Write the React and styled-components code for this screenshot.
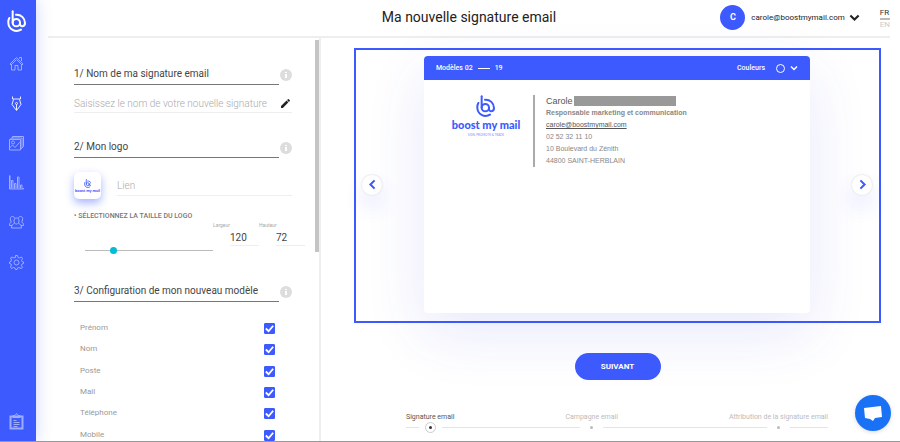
import React, { useState } from "react";
import styled, { createGlobalStyle } from "styled-components";

const BLUE = "#3d5afe";

const fields = ["Prénom", "Nom", "Poste", "Mail", "Téléphone", "Mobile"];

function LogoMark({ size }) {
  return (
    <LogoSvg $size={size} viewBox="0 0 58 66" aria-hidden="true">
      <path d="M17 4V38" />
      <circle cx="28" cy="38" r="11" />
      <path d="M27 14A25 25 0 0 1 54 39C54 51 39 52 39 42V38" />
      <path d="M7 24A25 25 0 0 0 4 38A25 25 0 0 0 42 59" />
    </LogoSvg>
  );
}

function BrandLogo({ small }) {
  return (
    <Brand $small={small}>
      <LogoMark size={small ? 9 : 22} />
      <BrandName $small={small}>boost my mail</BrandName>
      {!small && <BrandBaseline>SIGN, PROMOTE &amp; TRACK</BrandBaseline>}
    </Brand>
  );
}

function HomeIcon() {
  return (
    <Icon viewBox="0 0 30 30">
      <path d="M2 16L15 3l13 13-2 2L15 7 4 18zM5 17v11h7v-9h6v9h7V17M21 5V3h4v7" />
    </Icon>
  );
}

function PenIcon() {
  return (
    <Icon viewBox="0 0 30 30">
      <path d="M7 1v5h16V1M9 7L6 17l9 12 9-12-3-10M15 28V17" />
      <circle cx="15" cy="15" r="2" />
    </Icon>
  );
}

function PicturesIcon() {
  return (
    <Icon viewBox="0 0 30 30">
      <path d="M1 7h22v21H1zM4 7V4h22v20l-3 3M7 4V1h22v20l-3 3M1 24l6-6 5 5 9-10 2 2" />
      <circle cx="8" cy="13" r="3" />
    </Icon>
  );
}

function StatsIcon() {
  return (
    <Icon viewBox="0 0 30 30">
      <path d="M1 1v27h28v-2M5 27V11h3v16M11 27V17h3v10M17 27V4h3v23M23 27v-7h3v7" />
      <path d="M2 1v27" />
    </Icon>
  );
}

function UsersIcon() {
  return (
    <Icon viewBox="0 0 30 30">
      <path d="M15 6c-4 0-5 3-5 6s2 6 5 6 5-3 5-6-1-6-5-6zM11 17c-4 1-6 3-6 9h20c0-6-2-8-6-9" />
      <path d="M11 7c0-3-2-4-4-4-4 0-5 3-4 7 0 2 1 3 2 4-3 1-4 3-4 7h5M19 7c0-3 2-4 4-4 4 0 5 3 4 7 0 2-1 3-2 4 3 1 4 3 4 7h-5" />
    </Icon>
  );
}

function GearIcon() {
  return (
    <Icon viewBox="0 0 30 30">
      <circle cx="15" cy="15" r="5" />
      <path d="M13 1h4l1 4 3 1 4-2 2 3-2 4 1 2 3 1v3l-3 1-1 3 2 4-3 2-4-2-3 1-1 3h-3l-1-3-3-1-4 2-2-3 2-4-1-2-3-1v-3l3-1 1-3-2-4 3-2 4 2 3-1z" />
    </Icon>
  );
}

function ClipboardIcon() {
  return (
    <Icon viewBox="0 0 30 34">
      <path strokeWidth="4" d="M3 7h24v24H3z" />
      <path d="M8 9V5h4l3-4 3 4h4v4zM9 15h6M9 19h12M9 23h12M9 27h8" />
    </Icon>
  );
}

function Chevron({ dir, width }) {
  const paths = {
    down: "M2 5l6 6 6-6",
    left: "M11 2L5 8l6 6",
    right: "M5 2l6 6-6 6",
  };
  return (
    <ChevronSvg $size={width} viewBox="0 0 16 16" aria-hidden="true">
      <path d={paths[dir]} />
    </ChevronSvg>
  );
}

const menu = [
  { name: "Accueil", icon: <HomeIcon /> },
  { name: "Signatures", icon: <PenIcon />, active: true },
  { name: "Campagnes", icon: <PicturesIcon /> },
  { name: "Statistiques", icon: <StatsIcon /> },
  { name: "Équipe", icon: <UsersIcon /> },
  { name: "Paramètres", icon: <GearIcon /> },
];

function SectionTitle({ children }) {
  return (
    <SectionHead>
      <h2>{children}</h2>
      <InfoButton type="button" aria-label="Informations">
        <svg viewBox="0 0 12 12">
          <path d="M5 5h2v4H5zM5 3h2v1H5z" />
        </svg>
      </InfoButton>
    </SectionHead>
  );
}

export default function App() {
  const [signatureName, setSignatureName] = useState("");
  const [link, setLink] = useState("");
  const [width, setWidth] = useState("120");
  const [height, setHeight] = useState("72");
  const [size, setSize] = useState(21);
  const [checked, setChecked] = useState(fields);

  const toggle = (field) => {
    setChecked(
      checked.includes(field)
        ? checked.filter((f) => f !== field)
        : [...checked, field]
    );
  };

  return (
    <Page>
      <GlobalStyle />
      <Sidebar>
        <LogoMark size={22} />
        <Menu>
          {menu.map((item) => (
            <MenuLink key={item.name} href="#" aria-label={item.name} $active={item.active}>
              {item.icon}
            </MenuLink>
          ))}
        </Menu>
        <MenuLink href="#" aria-label="Notes">
          <ClipboardIcon />
        </MenuLink>
      </Sidebar>

      <Content>
        <Header>
          <h1>Ma nouvelle signature email</h1>
          <Account>
            <Avatar>C</Avatar>
            <AccountButton type="button">
              carole@boostmymail.com
              <Chevron dir="down" width={11} />
            </AccountButton>
            <Languages>
              <LangLink href="#" $active>FR</LangLink>
              <LangLink href="#">EN</LangLink>
            </Languages>
          </Account>
        </Header>

        <Columns>
          <Settings>
            <Form>
              <section>
                <SectionTitle>1/ Nom de ma signature email</SectionTitle>
                <NameField>
                  <TextInput
                    aria-label="Nom de la signature"
                    placeholder="Saisissez le nom de votre nouvelle signature"
                    value={signatureName}
                    onChange={(e) => setSignatureName(e.target.value)}
                  />
                  <svg viewBox="0 0 18 18" aria-hidden="true">
                    <path d="M0 14.2V18h3.800L14.800 6.900 11.100 3.200zM17.700 4c.4-.4.4-1 0-1.400L15.400.3c-.4-.4-1-.4-1.400 0l-1.900 1.900 3.700 3.700z" />
                  </svg>
                </NameField>
              </section>

              <section>
                <SectionTitle>2/ Mon logo</SectionTitle>
                <LogoRow>
                  <LogoTile type="button" aria-label="Changer le logo">
                    <BrandLogo small />
                  </LogoTile>
                  <LinkField>
                    <TextInput
                      aria-label="Lien du logo"
                      placeholder="Lien"
                      value={link}
                      onChange={(e) => setLink(e.target.value)}
                    />
                  </LinkField>
                </LogoRow>
                <SizeTitle htmlFor="logo-size">• SÉLECTIONNEZ LA TAILLE DU LOGO</SizeTitle>
                <SizeRow>
                  <Slider
                    id="logo-size"
                    type="range"
                    value={size}
                    onChange={(e) => setSize(e.target.value)}
                  />
                  <SizeField>
                    <span>Largeur</span>
                    <input value={width} onChange={(e) => setWidth(e.target.value)} />
                  </SizeField>
                  <SizeField>
                    <span>Hauteur</span>
                    <input value={height} onChange={(e) => setHeight(e.target.value)} />
                  </SizeField>
                </SizeRow>
              </section>

              <section>
                <SectionTitle>3/ Configuration de mon nouveau modèle</SectionTitle>
                <FieldList>
                  {fields.map((field) => (
                    <FieldRow key={field}>
                      <span>{field}</span>
                      <CheckWrap>
                        <input
                          type="checkbox"
                          checked={checked.includes(field)}
                          onChange={() => toggle(field)}
                        />
                        <svg viewBox="0 0 12 12" aria-hidden="true">
                          <path d="M2 6l3 3 5-6" />
                        </svg>
                      </CheckWrap>
                    </FieldRow>
                  ))}
                </FieldList>
              </section>
            </Form>
            <ScrollThumb />
          </Settings>

          <Preview>
            <Frame>
              <RoundButton type="button" aria-label="Modèle précédent">
                <Chevron dir="left" width={11} />
              </RoundButton>
              <Card>
                <CardHeader>
                  <span>Modèles 02</span>
                  <Dash />
                  <span>19</span>
                  <ColorButton type="button">
                    Couleurs
                    <ColorDot />
                    <Chevron dir="down" width={8} />
                  </ColorButton>
                </CardHeader>
                <Signature>
                  <BrandLogo />
                  <Contact>
                    <ContactName>
                      Carole <Redacted />
                    </ContactName>
                    <strong>Responsable marketing et communication</strong>
                    <a href="mailto:carole@boostmymail.com">carole@boostmymail.com</a>
                    <span>02 52 32 11 10</span>
                    <span>10 Boulevard du Zénith</span>
                    <span>44800 SAINT-HERBLAIN</span>
                  </Contact>
                </Signature>
              </Card>
              <RoundButton type="button" aria-label="Modèle suivant">
                <Chevron dir="right" width={11} />
              </RoundButton>
            </Frame>

            <NextButton type="button">SUIVANT</NextButton>

            <Steps>
              <Step $active>
                <span>Signature email</span>
                <StepTrack><Line /><StepDot $active /><Line /></StepTrack>
              </Step>
              <Line />
              <Step>
                <span>Campagne email</span>
                <StepTrack><Line /><StepDot /><Line /></StepTrack>
              </Step>
              <Line />
              <Step>
                <span>Attribution de la signature email</span>
                <StepTrack><Line /><StepDot /><Line /></StepTrack>
              </Step>
            </Steps>
          </Preview>
        </Columns>
      </Content>

      <ChatButton type="button" aria-label="Ouvrir le chat">
        <svg viewBox="0 0 36 36">
          <path d="M9 13l17-2 1 11-7 1-2 3-3-2-5-1z" />
        </svg>
      </ChatButton>
    </Page>
  );
}

const GlobalStyle = createGlobalStyle`
  * {
    box-sizing: border-box;
  }
  body {
    margin: 0;
    font-family: Roboto, "Liberation Sans", sans-serif;
    color: #444;
    background: #fff;
  }
  h1, h2 {
    margin: 0;
    font-weight: 400;
  }
  button, input {
    font-family: inherit;
    border: none;
    background: none;
    padding: 0;
    margin: 0;
    outline: none;
  }
  button {
    cursor: pointer;
  }
  a {
    color: inherit;
    text-decoration: none;
  }
`;

const Page = styled.div`
  display: flex;
  height: 100vh;
  overflow: hidden;
  border-bottom: 1px solid #999;
`;

const Sidebar = styled.aside`
  width: 36px;
  flex-shrink: 0;
  display: flex;
  flex-direction: column;
  align-items: center;
  padding: 10px 3px 11px 0;
  background: ${BLUE};
  color: #fff;
  box-shadow: 0 0 16px rgba(61, 90, 254, 0.25);
`;

const LogoSvg = styled.svg`
  display: block;
  flex-shrink: 0;
  height: ${(props) => props.$size}px;
  fill: none;
  stroke: currentColor;
  stroke-width: 6;
  stroke-linecap: round;
`;

const Menu = styled.nav`
  display: grid;
  grid-auto-rows: 1fr;
  height: 238px;
  margin: 12px 0 auto;
`;

const MenuLink = styled.a`
  display: flex;
  align-items: center;
  opacity: ${(props) => (props.$active ? 0.9 : 0.5)};
`;

const Icon = styled.svg`
  width: 15px;
  fill: none;
  stroke: currentColor;
  stroke-width: 2;
`;

const ChevronSvg = styled.svg`
  width: ${(props) => props.$size}px;
  height: ${(props) => props.$size}px;
  fill: none;
  stroke: currentColor;
  stroke-width: 3;
`;

const Content = styled.div`
  flex: 1;
  min-width: 0;
  display: flex;
  flex-direction: column;
`;

const Header = styled.header`
  display: grid;
  grid-template-columns: 1fr auto 1fr;
  align-items: center;
  height: 38px;
  flex-shrink: 0;
  margin: 0 10px 0 12px;
  padding-bottom: 2px;
  border-bottom: 2px solid #eee;

  h1 {
    grid-column: 2;
    font-size: 14px;
    line-height: 18px;
    color: #222;
  }
`;

const Account = styled.div`
  display: flex;
  align-items: center;
  justify-content: flex-end;
`;

const Avatar = styled.div`
  width: 25px;
  height: 25px;
  margin-right: 6px;
  border-radius: 50%;
  background: ${BLUE};
  color: #fff;
  font-size: 9px;
  font-weight: 700;
  line-height: 25px;
  text-align: center;
`;

const AccountButton = styled.button`
  display: flex;
  align-items: center;
  gap: 4px;
  margin-right: 20px;
  font-size: 8px;
  color: #222;
`;

const Languages = styled.div`
  display: flex;
  flex-direction: column;
  padding-top: 4px;
`;

const LangLink = styled.a`
  font-size: 8px;
  line-height: 10px;
  color: ${(props) => (props.$active ? "#333" : "#ccc")};
  border-bottom: ${(props) => (props.$active ? "2px solid #bbb" : "none")};
`;

const Columns = styled.div`
  flex: 1;
  min-height: 0;
  display: flex;
`;

const Settings = styled.div`
  width: 285px;
  flex-shrink: 0;
  display: flex;
  overflow: hidden;
  border-right: 2px solid #eee;
`;

const Form = styled.form`
  flex: 1;
  display: flex;
  flex-direction: column;
  gap: 24px;
  padding: 26px 10px 0 38px;
`;

const ScrollThumb = styled.div`
  flex-shrink: 0;
  width: 4px;
  height: 212px;
  margin-top: 2px;
  background: #c4c4c4;
`;

const SectionHead = styled.div`
  display: flex;
  align-items: center;
  gap: 1px;
  width: 218px;

  h2 {
    flex: 1;
    height: 21px;
    border-bottom: 1px solid #777;
    font-size: 10px;
    line-height: 20px;
    color: #444;
  }
`;

const InfoButton = styled.button`
  width: 12px;
  height: 12px;
  border-radius: 50%;
  background: #ddd;

  svg {
    display: block;
    fill: #fff;
  }
`;

const NameField = styled.div`
  display: flex;
  align-items: center;
  width: 218px;
  height: 28px;
  padding: 10px 2px 0 0;
  border-bottom: 1px solid #eee;

  svg {
    width: 9px;
    fill: #222;
  }
`;

const TextInput = styled.input`
  flex: 1;
  min-width: 0;
  font-size: 10px;
  line-height: 16px;
  color: #444;

  &::placeholder {
    color: #aaa;
    font-weight: 300;
  }
`;

const LogoRow = styled.div`
  display: flex;
  gap: 16px;
  width: 218px;
  padding-top: 14px;
`;

const LogoTile = styled.button`
  width: 27px;
  height: 27px;
  flex-shrink: 0;
  display: flex;
  align-items: center;
  justify-content: center;
  border-radius: 5px;
  background: #fff;
  box-shadow: 0 4px 8px rgba(61, 90, 254, 0.45);
`;

const LinkField = styled.div`
  flex: 1;
  display: flex;
  align-items: center;
  height: 24px;
  padding-top: 4px;
  border-bottom: 1px solid #eee;
`;

const Brand = styled.div`
  display: flex;
  flex-direction: column;
  align-items: center;
  min-width: ${(props) => (props.$small ? 0 : 72)}px;
  color: ${BLUE};
  font-family: Lato, sans-serif;
`;

const BrandName = styled.span`
  font-size: ${(props) => (props.$small ? 4 : 11)}px;
  line-height: ${(props) => (props.$small ? 5 : 16)}px;
  font-weight: 900;
  white-space: nowrap;
`;

const BrandBaseline = styled.span`
  font-size: 3px;
  line-height: 4px;
  opacity: 0.7;
  white-space: nowrap;
`;

const SizeTitle = styled.label`
  display: block;
  margin-top: 12px;
  font-size: 7px;
  font-weight: 500;
  line-height: 10px;
  color: #777;
`;

const SizeRow = styled.div`
  display: flex;
  align-items: flex-end;
  gap: 17px;
  padding: 0 0 2px 11px;
`;

const Slider = styled.input`
  appearance: none;
  width: 128px;
  height: 7px;
  margin-bottom: 1px;
  background: linear-gradient(#bbb, #bbb) center / 100% 1px no-repeat;

  &::-webkit-slider-thumb {
    appearance: none;
    width: 7px;
    height: 7px;
    border-radius: 50%;
    background: #00bcd4;
  }
`;

const SizeField = styled.label`
  display: flex;
  flex-direction: column;
  width: 29px;
  margin-bottom: 9px;

  span {
    margin-left: -17px;
    font-size: 5px;
    line-height: 8px;
    color: #aaa;
  }

  input {
    width: 29px;
    height: 17px;
    font-size: 10px;
    color: #444;
    border-bottom: 1px solid #eee;
  }
`;

const FieldList = styled.div`
  display: grid;
  grid-auto-rows: 1fr;
  width: 195px;
  height: 128px;
  margin: 15px 0 0 6px;
`;

const FieldRow = styled.label`
  display: flex;
  align-items: center;
  justify-content: space-between;
  font-size: 8px;
  color: #999;
`;

const CheckWrap = styled.span`
  display: grid;
  padding-top: 2px;

  input,
  svg {
    grid-area: 1 / 1;
    width: 11px;
    height: 11px;
  }
  input {
    appearance: none;
    border-radius: 1px;
    border: 1px solid ${BLUE};
  }
  input:checked {
    background: ${BLUE};
  }
  svg {
    fill: none;
    stroke: #fff;
    stroke-width: 2;
    pointer-events: none;
  }
`;

const Preview = styled.main`
  flex: 1;
  min-width: 0;
  display: flex;
  flex-direction: column;
  align-items: center;
  padding: 10px 19px 0 33px;
`;

const Frame = styled.section`
  align-self: stretch;
  display: flex;
  align-items: center;
  gap: 42px;
  padding: 6px 7px 8px 6px;
  border: 2px solid ${BLUE};
`;

const RoundButton = styled.button`
  display: flex;
  align-items: center;
  justify-content: center;
  width: 20px;
  height: 20px;
  flex-shrink: 0;
  border-radius: 50%;
  background: #fff;
  color: ${BLUE};
  box-shadow: 0 0 1px 1px #eee, 0 12px 20px rgba(61, 90, 254, 0.15);
`;

const Card = styled.article`
  flex: 1;
  min-width: 0;
  min-height: 257px;
  border-radius: 4px;
  background: #fff;
  box-shadow: 0 20px 60px rgba(61, 70, 220, 0.12);
`;

const CardHeader = styled.div`
  display: flex;
  align-items: center;
  height: 24px;
  padding: 0 12px;
  border-radius: 4px 4px 0 0;
  background: ${BLUE};
  color: #fff;
  font-size: 7px;
  font-weight: 500;
`;

const Dash = styled.i`
  width: 12px;
  height: 1px;
  margin: 0 5px;
  background: #fff;
`;

const ColorButton = styled.button`
  display: flex;
  align-items: center;
  margin-left: auto;
  gap: 5px;
  color: #fff;
  font-size: 7px;
  font-weight: 500;
`;

const ColorDot = styled.i`
  width: 9px;
  height: 9px;
  margin-left: 6px;
  border: 1px solid #fff;
  border-radius: 50%;
`;

const Signature = styled.div`
  display: flex;
  align-items: flex-start;
  gap: 11px;
  padding: 15px 26px;
`;

const Contact = styled.address`
  display: flex;
  flex-direction: column;
  align-items: flex-start;
  padding-left: 11px;
  border-left: 2px solid #aaa;
  font-family: "Liberation Sans", Arial, sans-serif;
  font-style: normal;
  font-size: 7px;
  line-height: 12px;
  color: #888;

  a {
    color: #555;
    text-decoration: underline;
  }
`;

const ContactName = styled.span`
  display: flex;
  align-items: center;
  gap: 1px;
  font-size: 9px;
  color: #555;
`;

const Redacted = styled.i`
  width: 102px;
  height: 10px;
  background: #999;
`;

const NextButton = styled.button`
  width: 86px;
  height: 27px;
  flex-shrink: 0;
  margin-top: 30px;
  border-radius: 14px;
  background: ${BLUE};
  color: #fff;
  font-size: 8px;
  font-weight: 700;
`;

const Steps = styled.div`
  align-self: stretch;
  display: flex;
  align-items: flex-end;
  margin: 32px 53px 0 52px;
`;

const Line = styled.i`
  flex: 1;
  height: 1px;
  margin-bottom: 5px;
  background: #e4e4e4;
`;

const Step = styled.div`
  display: flex;
  flex-direction: column;
  font-size: 7px;
  line-height: 10px;
  color: ${(props) => (props.$active ? "#555" : "#bbb")};
`;

const StepTrack = styled.div`
  display: flex;
  align-items: flex-end;
`;

const StepDot = styled.span`
  display: flex;
  align-items: center;
  justify-content: center;
  width: 11px;
  height: 11px;
  margin: 0 6px;
  border-radius: 50%;
  border: 1px solid ${(props) => (props.$active ? "#ccc" : "transparent")};

  &::after {
    content: "";
    width: 3px;
    height: 3px;
    border-radius: 50%;
    background: ${(props) => (props.$active ? "#333" : "#bbb")};
  }
`;

const ChatButton = styled.button`
  position: fixed;
  right: 9px;
  bottom: 11px;
  width: 36px;
  height: 36px;
  border-radius: 50%;
  background: #1972f5;
  box-shadow: 0 1px 4px rgba(0, 0, 0, 0.15);

  svg {
    display: block;
    fill: #fff;
  }
`;
